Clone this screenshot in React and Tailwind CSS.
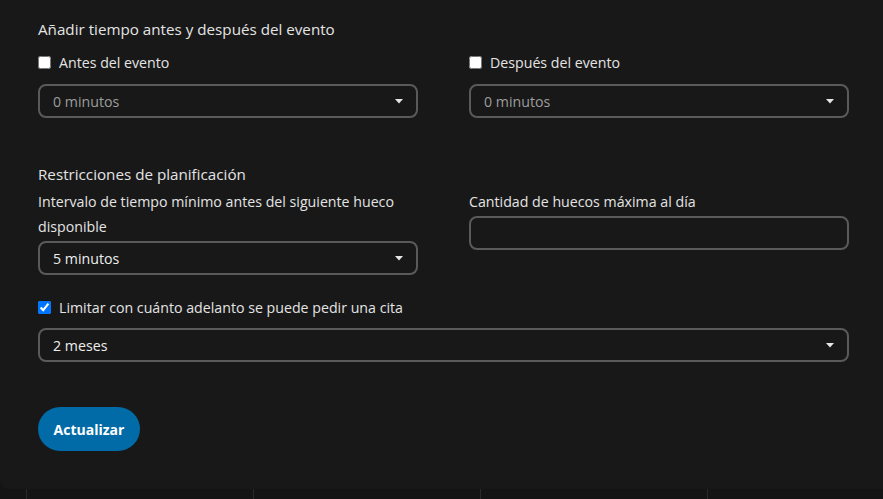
import React from "react";

const Caret = () => (
  <svg width="8" height="5" viewBox="0 0 8 5" className="shrink-0">
    <polygon points="0,0 8,0 4,4.5" fill="#e6e6e6" />
  </svg>
);

const SelectBox = ({ value, muted = false }) => (
  <div className="flex h-[34px] w-full items-center justify-between rounded-lg border-2 border-[#5a5a5a] pl-[13px] pr-[13px] text-[14.2px]">
    <span className={`pt-[2px] ${muted ? "text-[#9d9d9d]" : "text-[#eeeeee]"}`}>{value}</span>
    <Caret />
  </div>
);

const Check = ({ label, checked = false }) => (
  <label className="flex h-6 items-center gap-2 text-[14.2px]">
    <input type="checkbox" defaultChecked={checked} className="m-0 h-[13px] w-[13px] accent-[#0075ff]" />
    <span className="pt-[2px]">{label}</span>
  </label>
);

export default function App() {
  return (
    <div
      className="h-[499px] w-full overflow-hidden bg-[#141414] text-[15px] text-[#e4e4e4]"
      style={{ fontFamily: '"Open Sans", "Noto Sans", sans-serif' }}
    >
      <div className="rounded-bl-lg bg-[#181818] pb-[38px] pl-[38px] pr-[34px] pt-[17px]">
        <div className="text-[15.2px] leading-6">Añadir tiempo antes y después del evento</div>

        <div className="mt-[9px] grid grid-cols-2 gap-x-[51px]">
          <div>
            <Check label="Antes del evento" />
            <div className="mt-[10px]">
              <SelectBox value="0 minutos" muted />
            </div>
          </div>
          <div>
            <Check label="Después del evento" />
            <div className="mt-[10px]">
              <SelectBox value="0 minutos" muted />
            </div>
          </div>
        </div>

        <div className="mt-[44px] text-[15.2px] leading-6">Restricciones de planificación</div>

        <div className="mt-[2px] grid grid-cols-2 gap-x-[51px] text-[14.2px]">
          <div>
            <div className="pt-px leading-[25px]">Intervalo de tiempo mínimo antes del siguiente hueco disponible</div>
            <div className="mt-[2px]">
              <SelectBox value="5 minutos" />
            </div>
          </div>
          <div>
            <div className="pt-px leading-[25px]">Cantidad de huecos máxima al día</div>
            <div className="mt-[2px] h-[34px] w-full rounded-lg border-2 border-[#5a5a5a]" />
          </div>
        </div>

        <div className="mt-[20px]">
          <Check label="Limitar con cuánto adelanto se puede pedir una cita" checked />
        </div>
        <div className="mt-[9px]">
          <SelectBox value="2 meses" />
        </div>

        <button
          type="button"
          className="mt-[45px] flex h-[44px] w-[102px] items-center justify-center rounded-full bg-[#006ba6] text-[14px] font-bold text-white"
        >
          Actualizar
        </button>
      </div>

      <div className="flex pl-[26px]">
        {["3", "4", "5", "6"].map((d) => (
          <div key={d} className="h-[40px] w-[227px] shrink-0 border-l border-[#2a2a2a] pt-[3px] text-center text-[#8a8a8a]">
            {d}
          </div>
        ))}
      </div>
    </div>
  );
}
